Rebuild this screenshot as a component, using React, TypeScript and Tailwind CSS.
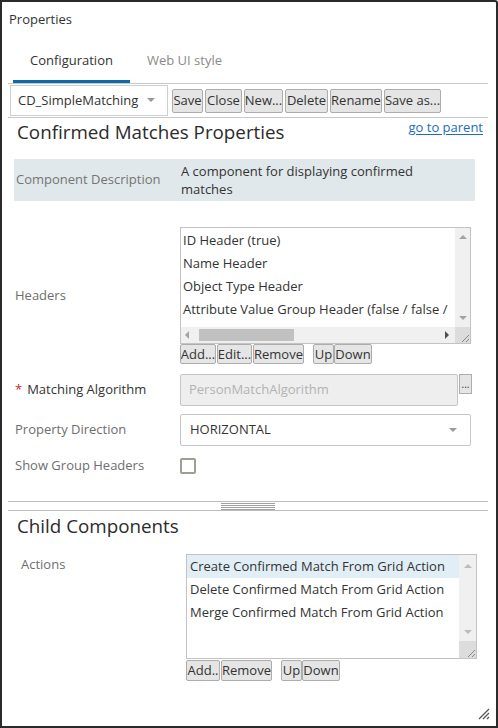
import React from 'react';

// Small gray triangle used by scrollbars and dropdowns
function Arrow({ dir, className = '' }: { dir: 'up' | 'down' | 'left' | 'right'; className?: string }) {
  const pts: Record<string, string> = {
    up: '0,4 4,0 8,4',
    down: '0,0 8,0 4,4',
    left: '4,0 4,8 0,4',
    right: '0,0 0,8 4,4',
  };
  const vertical = dir === 'up' || dir === 'down';
  return (
    <svg width={vertical ? 8 : 4} height={vertical ? 4 : 8} className={className}>
      <polygon points={pts[dir]} fill="currentColor" />
    </svg>
  );
}

function Grip({ className = '' }: { className?: string }) {
  return (
    <svg width="10" height="10" className={className}>
      <line x1="9" y1="2" x2="2" y2="9" stroke="currentColor" strokeWidth="1" />
      <line x1="9" y1="6" x2="6" y2="9" stroke="currentColor" strokeWidth="1" />
    </svg>
  );
}

function Btn({ label, w, h = 'h-[24px]' }: { label: string; w: string; h?: string }) {
  return (
    <button
      className={`${w} ${h} flex items-center justify-center border border-[#adadad] rounded-[2px] bg-[#e5e5e5] text-[#333] text-[13px] leading-none whitespace-nowrap overflow-hidden`}
    >
      {label}
    </button>
  );
}

// the last entry is shown cut off by the list's scrollbar
const headers = [
  'ID Header (true)',
  'Name Header',
  'Object Type Header',
  'Attribute Value Group Header (false / false /',
];

const actions = [
  'Create Confirmed Match From Grid Action',
  'Delete Confirmed Match From Grid Action',
  'Merge Confirmed Match From Grid Action',
];

export default function App() {
  return (
    <div className="relative w-[498px] h-[728px] border-2 border-[#2b2b2b] rounded-tr-[3px] bg-white text-[13px] text-[#333] font-['Open_Sans',sans-serif] overflow-hidden">
      {/* Title */}
      <div className="mt-[7px] ml-[7px] h-[20px] leading-[20px]">Properties</div>

      {/* Tabs */}
      <div className="mt-[12px] ml-[6px] w-[480px] flex border-b border-[#c8c8c8]">
        <div className="ml-[5px] w-[117px] h-[42px] border-b-[3px] border-[#0e6aa8] flex items-center justify-center text-[#333]">
          Configuration
        </div>
        <div className="w-[109px] h-[42px] border-b-[3px] border-transparent flex items-center justify-center text-[#8a8a8a]">
          Web UI style
        </div>
      </div>

      {/* Toolbar */}
      <div className="ml-[6px] w-[480px] h-[34px] flex items-center border-b border-[#c8c8c8]">
        <div className="ml-[2px] w-[158px] h-[31px] border border-[#cfcfcf] flex items-center justify-between pl-[7px] pr-[11px] self-start mt-[1px]">
          <span>CD_SimpleMatching</span>
          <Arrow dir="down" className="text-[#999] w-[9px] h-[5px]" />
        </div>
        <div className="ml-[4px] flex gap-[2px]">
          <Btn label="Save" w="w-[31px]" />
          <Btn label="Close" w="w-[37px]" />
          <Btn label="New..." w="w-[39px]" />
          <Btn label="Delete" w="w-[43px]" />
          <Btn label="Rename" w="w-[52px]" />
          <Btn label="Save as..." w="w-[57px]" />
        </div>
      </div>

      {/* Heading */}
      <div className="ml-[6px] w-[480px] flex justify-between items-start pl-[9px] pr-[5px]">
        <div className="mt-[2px] h-[24px] leading-[24px] text-[18.8px] text-[#2b2b2b]">Confirmed Matches Properties</div>
        <a className="h-[18px] leading-[18px] text-[#1b6cbf] underline underline-offset-2">go to parent</a>
      </div>

      {/* Component description */}
      <div className="mt-[15px] ml-[12px] w-[461px] h-[42px] bg-[#e1e8eb] flex items-center">
        <div className="w-[166px] pl-[2px] text-[#747474]">Component Description</div>
        <div className="w-[260px] pl-[1px] leading-[18px]">A component for displaying confirmed matches</div>
      </div>

      {/* Headers */}
      <div className="mt-[26px] ml-[12px] flex items-center">
        <div className="w-[166px] pl-[1px] text-[#6e6e6e]">Headers</div>
        <div>
          <div className="w-[291px] h-[117px] border border-[#c3c3c3] flex flex-col">
            <div className="flex flex-1 min-h-0">
              <div className="flex-1 min-w-0 pt-[1px] pl-[2px] overflow-hidden">
                {headers.map((h) => (
                  <div key={h} className="h-[23px] leading-[23px] whitespace-nowrap">{h}</div>
                ))}
              </div>
              <div className="w-[15px] bg-[#f0f0f0] flex flex-col items-center justify-between py-[7px] text-[#a3a3a3]">
                <Arrow dir="up" />
                <Arrow dir="down" />
              </div>
            </div>
            <div className="h-[16px] flex">
              <div className="flex-1 bg-[#f0f0f0] flex items-center pl-[4px] pr-[6px] text-[#a3a3a3]">
                <Arrow dir="left" />
                <div className="ml-[10px] w-[95px] h-[12px] bg-[#c1c1c1]" />
                <div className="flex-1" />
                <Arrow dir="right" className="text-[#505050]" />
              </div>
              <div className="w-[15px] bg-[#dcdcdc] flex items-end justify-end text-[#888]">
                <Grip />
              </div>
            </div>
          </div>
          <div className="flex">
            <Btn label="Add..." w="w-[36px]" h="h-[20px]" />
            <div className="ml-[1px]"><Btn label="Edit..." w="w-[35px]" h="h-[20px]" /></div>
            <div className="ml-[1px]"><Btn label="Remove" w="w-[51px]" h="h-[20px]" /></div>
            <div className="ml-[9px]"><Btn label="Up" w="w-[21px]" h="h-[20px]" /></div>
            <Btn label="Down" w="w-[38px]" h="h-[20px]" />
          </div>
        </div>
      </div>

      {/* Matching Algorithm */}
      <div className="mt-[10px] ml-[12px] flex items-center">
        <div className="w-[166px] pl-[1px] text-[#333] flex items-center">
          <span className="text-[#c62828] mr-[5px]">*</span>Matching Algorithm
        </div>
        <div className="w-[278px] h-[32px] border border-[#c6c6c6] rounded-[2px] bg-[#eeeeee] text-[#b3b3b3] flex items-center pl-[8px]">
          PersonMatchAlgorithm
        </div>
        <div className="ml-[1px] self-start w-[13px] h-[20px] border border-[#adadad] bg-[#e5e5e5] text-[10px] leading-[12px] flex items-end justify-center pb-[3px]">
          ...
        </div>
      </div>

      {/* Property Direction */}
      <div className="mt-[8px] ml-[12px] flex items-center">
        <div className="w-[166px] pl-[1px] text-[#6e6e6e]">Property Direction</div>
        <div className="w-[291px] h-[32px] border border-[#c6c6c6] rounded-[2px] flex items-center justify-between pl-[9px] pr-[12px]">
          <span>HORIZONTAL</span>
          <Arrow dir="down" className="text-[#999] w-[9px] h-[5px]" />
        </div>
      </div>

      {/* Show Group Headers */}
      <div className="mt-[10px] ml-[12px] h-[20px] flex items-center">
        <div className="w-[166px] pl-[1px] text-[#6e6e6e]">Show Group Headers</div>
        <div className="w-[16px] h-[16px] border-2 border-[#9e9e94] rounded-[2px]" />
      </div>

      {/* Splitter */}
      <div className="mt-[25px] ml-[6px] w-[480px] h-[10px] border-y border-[#bdbdbd] flex justify-center">
        <div className="w-[54px] flex flex-col gap-[1px] pt-[1px]">
          <div className="h-px bg-[#a0a0a0]" />
          <div className="h-px bg-[#a0a0a0]" />
          <div className="h-px bg-[#a0a0a0]" />
          <div className="h-px bg-[#a0a0a0]" />
        </div>
      </div>

      {/* Child components */}
      <div className="mt-[3px] ml-[15px] h-[24px] leading-[24px] text-[18.8px] text-[#2b2b2b]">Child Components</div>

      <div className="mt-[16px] ml-[19px] flex">
        <div className="w-[165px] mt-[1px] h-[18px] leading-[18px] text-[#6e6e6e]">Actions</div>
        <div>
          <div className="w-[291px] h-[105px] border border-[#c3c3c3] flex">
            <div className="flex-1 min-w-0">
              {actions.map((a, i) => (
                <div
                  key={a}
                  className={`h-[23px] leading-[23px] pl-[3px] whitespace-nowrap ${i === 0 ? 'bg-[#e2eef6]' : ''}`}
                >
                  {a}
                </div>
              ))}
            </div>
            <div className="w-[17px] flex flex-col">
              <div className="flex-1 bg-[#f0f0f0] flex flex-col items-center justify-between pt-[9px] pb-[7px] text-[#bcbcbc]">
                <Arrow dir="up" />
                <Arrow dir="down" />
              </div>
              <div className="h-[17px] bg-[#dcdcdc] flex items-end justify-end text-[#888]">
                <Grip />
              </div>
            </div>
          </div>
          <div className="mt-[1px] flex">
            <Btn label="Add.." w="w-[34px]" h="h-[21px]" />
            <div className="ml-[1px]"><Btn label="Remove" w="w-[51px]" h="h-[21px]" /></div>
            <div className="ml-[9px]"><Btn label="Up" w="w-[21px]" h="h-[21px]" /></div>
            <Btn label="Down" w="w-[38px]" h="h-[21px]" />
          </div>
        </div>
      </div>

      {/* Window resize grip */}
      <svg width="12" height="12" className="absolute right-[6px] bottom-[6px] text-[#555]">
        <line x1="11" y1="1" x2="1" y2="11" stroke="currentColor" strokeWidth="1.2" />
        <line x1="11" y1="5" x2="5" y2="11" stroke="currentColor" strokeWidth="1.2" />
        <line x1="11" y1="9" x2="9" y2="11" stroke="currentColor" strokeWidth="1.2" />
      </svg>
    </div>
  );
}
